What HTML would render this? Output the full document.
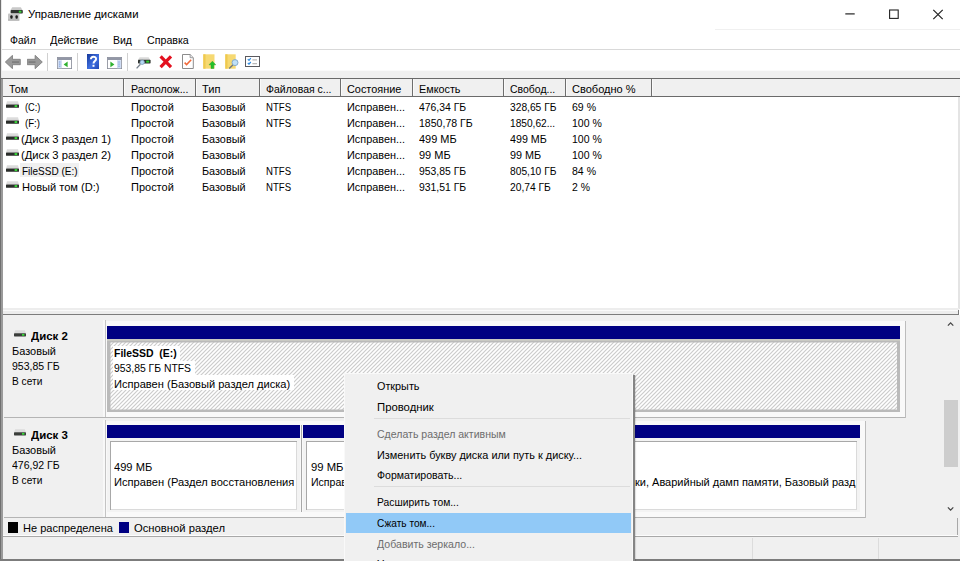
<!DOCTYPE html>
<html lang="ru">
<head>
<meta charset="utf-8">
<title>Управление дисками</title>
<style>
html,body{margin:0;padding:0;}
body{width:960px;height:561px;overflow:hidden;background:#fff;position:relative;font-family:"Liberation Sans","DejaVu Sans",sans-serif;font-size:11px;color:#000;}
.a{position:absolute;}
.t{position:absolute;white-space:pre;line-height:16px;height:16px;transform-origin:0 50%;}
.b{font-weight:bold;}
</style>
</head>
<body>
<svg class="a" style="left:840px;top:0px;" width="120" height="30" viewBox="0 0 120 30">
<path d="M5.3 13.9h9.4" stroke="#222" stroke-width="1.2" fill="none"/>
<rect x="49.6" y="10" width="8.6" height="8.4" stroke="#222" stroke-width="1.1" fill="none"/>
<path d="M93.3 9.8l9.4 9.4M102.7 9.8l-9.4 9.4" stroke="#222" stroke-width="1.2" fill="none"/>
</svg>
<div class="a" style="left:715px;top:29px;width:245px;height:1px;background:#f0f0f0;"></div>
<div class="a" style="left:0px;top:49px;width:960px;height:1px;background:#d9d9d9;"></div>
<div class="a" style="left:0px;top:71px;width:960px;height:7px;background:#f0f0f0;"></div>
<div class="a" style="left:0px;top:70px;width:960px;height:1px;background:#fafafa;"></div>
<div class="a" style="left:47px;top:53px;width:1px;height:18px;background:#d0d0d0;"></div>
<div class="a" style="left:77px;top:53px;width:1px;height:18px;background:#d0d0d0;"></div>
<div class="a" style="left:127px;top:53px;width:1px;height:18px;background:#d0d0d0;"></div>
<div class="a" style="left:0px;top:0px;width:1px;height:561px;background:#707070;"></div>
<div class="a" style="left:1px;top:0px;width:1px;height:561px;background:#e8e8e8;"></div>
<svg class="a" style="left:8px;top:6px;" width="16" height="16" viewBox="0 0 16 16">
<path d="M4.2 1.2h8.6l1.6 2.8H2.6z" fill="#c9c9c9"/>
<rect x="2.6" y="4" width="12.2" height="3.4" rx="0.7" fill="#2f322f"/>
<rect x="10.8" y="4.7" width="2.6" height="2" fill="#3bd23b"/>
<rect x="0" y="7.4" width="11.4" height="7.2" rx="0.8" fill="#c6c6c6"/>
<rect x="0" y="13.6" width="11.4" height="1" fill="#a9a9a9"/>
<rect x="2.3" y="9.3" width="2.3" height="3.5" rx="1" fill="#1c1c1c"/>
<rect x="7.5" y="9.3" width="2.3" height="3.5" rx="1" fill="#1c1c1c"/>
</svg>
<svg class="a" style="left:5px;top:55px;" width="16" height="14" viewBox="0 0 16 14"><path d="M0.3 7L7.5 0.3V4.3H15.3V9.7H7.5V13.7Z" fill="#9a9a9a" stroke="#7a7a7a" stroke-width="0.8"/><path d="M7 6.2h7v1.8H7z" fill="#7f7f7f"/></svg>
<svg class="a" style="left:27px;top:55px;" width="16" height="14" viewBox="0 0 16 14"><path d="M15.3 7L8.1 0.3V4.3H0.3V9.7H8.1V13.7Z" fill="#9a9a9a" stroke="#7a7a7a" stroke-width="0.8"/><path d="M1.5 6.2h7v1.8h-7z" fill="#7f7f7f"/></svg>
<svg class="a" style="left:56.5px;top:57px;" width="15" height="12" viewBox="0 0 15 12"><rect x="0.4" y="0.4" width="14.2" height="11.2" fill="#fff" stroke="#8b8f9b" stroke-width="0.9"/>
<rect x="0.4" y="0.4" width="14.2" height="2.6" fill="#9297a6"/>
<rect x="0.9" y="3.2" width="4" height="8" fill="#cfdcf3"/>
<path d="M2.8 4.5v1M2.8 6.6v1M2.8 8.7v1" stroke="#5d86cf" stroke-width="1"/>
<path d="M10.6 4.6v5.6L6.6 7.4z" fill="#2fb12f"/></svg>
<svg class="a" style="left:86.6px;top:54px;" width="12.4" height="15" viewBox="0 0 12.4 15"><defs><linearGradient id="hg" x1="0" y1="0" x2="1" y2="1"><stop offset="0" stop-color="#16389a"/><stop offset="0.55" stop-color="#3f6fe0"/><stop offset="1" stop-color="#2146b4"/></linearGradient></defs>
<rect x="0" y="0" width="12.4" height="15" fill="url(#hg)"/>
<path d="M3.9 5.2c0-3.2 5.2-3.2 5.2-0.2c0 2-2.6 2.2-2.6 4.6" stroke="#fff" stroke-width="1.9" fill="none"/><rect x="5.5" y="10.8" width="2" height="2" fill="#fff"/></svg>
<svg class="a" style="left:107.2px;top:57px;" width="15" height="12" viewBox="0 0 15 12"><rect x="0.4" y="0.4" width="14.2" height="11.2" fill="#fff" stroke="#8b8f9b" stroke-width="0.9"/>
<rect x="0.4" y="0.4" width="14.2" height="2.6" fill="#9297a6"/>
<rect x="10" y="3.2" width="4.1" height="8" fill="#cfdcf3"/>
<path d="M12 4.5v1M12 6.6v1M12 8.7v1" stroke="#5d86cf" stroke-width="1"/>
<path d="M3.4 4.6v5.6L7.4 7.4z" fill="#2fb12f"/></svg>
<svg class="a" style="left:136px;top:57px;" width="15" height="12" viewBox="0 0 15 12"><path d="M3.6 0.3h9l1.6 2.6H2z" fill="#dadada"/>
<rect x="2" y="2.8" width="12.6" height="3.6" rx="0.7" fill="#30342f"/>
<rect x="10.2" y="3.6" width="3" height="2" fill="#2fd22f"/>
<circle cx="6.2" cy="5.3" r="2.2" fill="#b5d9f4" stroke="#7f9fbd" stroke-width="0.8"/>
<path d="M4.4 7.2L0.6 11.4" stroke="#77808c" stroke-width="1.3"/></svg>
<svg class="a" style="left:159px;top:55px;" width="14" height="14" viewBox="0 0 14 14"><path d="M1.6 1.4L12 12.2M12 1.4L1.6 12.2" stroke="#e3101f" stroke-width="3.2" fill="none"/></svg>
<svg class="a" style="left:181.5px;top:54px;" width="12" height="15" viewBox="0 0 12 15"><path d="M0.5 0.5h7.6l3.2 3.2v10.8H0.5z" fill="#fff" stroke="#8c8c8c" stroke-width="1"/>
<path d="M8.1 0.5v3.2h3.2" fill="#e4e4ea" stroke="#8c8c8c" stroke-width="0.8"/>
<path d="M2.6 8.6l2 2L9.2 5.8" stroke="#f0693a" stroke-width="1.5" fill="none"/></svg>
<svg class="a" style="left:203px;top:54px;" width="13" height="15" viewBox="0 0 13 15"><path d="M0.3 0.3h11.2v14.4H0.3z" fill="#f6d972"/><path d="M0.3 0.3h2.2v14.4H0.3z" fill="#efc94f"/>
<path d="M9.4 7.2l3.4 3.6h-2v3.7H8v-3.7H6z" fill="#22c22a" stroke="#1b9a22" stroke-width="0.4"/></svg>
<svg class="a" style="left:225px;top:54px;" width="14" height="15" viewBox="0 0 14 15"><path d="M0.3 0.3h10.4v14.4H0.3z" fill="#f6d972"/><path d="M0.3 0.3h2.2v14.4H0.3z" fill="#efc94f"/>
<circle cx="10" cy="8.6" r="3" fill="#bfe0f7" stroke="#7fa5c6" stroke-width="0.9"/>
<path d="M7.8 11L4.2 14.4" stroke="#6f7782" stroke-width="1.4"/></svg>
<svg class="a" style="left:245px;top:56px;" width="15" height="11" viewBox="0 0 15 11"><rect x="0.5" y="0.5" width="14" height="10" fill="#fff" stroke="#5a5a5f" stroke-width="1"/>
<path d="M2.8 3.2l1.2 1.2 1.8-2.2M2.8 7l1.2 1.2 1.8-2.2" stroke="#2f8be0" stroke-width="1.2" fill="none"/>
<path d="M7.4 3.8h4.6M7.4 7.6h4.6" stroke="#b9b9b9" stroke-width="1.2"/></svg>
<div class="a" style="left:1px;top:78px;width:959px;height:1.4px;background:#6a6a6a;"></div>
<div class="a" style="left:1px;top:79px;width:2px;height:482px;background:#9a9a9a;"></div>
<div class="a" style="left:3px;top:79.4px;width:957px;height:16.4px;background:#f0f0f0;"></div>
<div class="a" style="left:3px;top:95.5px;width:957px;height:1.3px;background:#6a6a6a;"></div>
<div class="a" style="left:958px;top:97px;width:2px;height:212px;background:#e4e4e4;"></div>
<div class="a" style="left:122.8px;top:79px;width:1.4px;height:17px;background:#6e6e6e;"></div>
<div class="a" style="left:124.2px;top:79.4px;width:1px;height:16px;background:#fafafa;"></div>
<div class="a" style="left:194.8px;top:79px;width:1.4px;height:17px;background:#6e6e6e;"></div>
<div class="a" style="left:196.2px;top:79.4px;width:1px;height:16px;background:#fafafa;"></div>
<div class="a" style="left:258.8px;top:79px;width:1.4px;height:17px;background:#6e6e6e;"></div>
<div class="a" style="left:260.2px;top:79.4px;width:1px;height:16px;background:#fafafa;"></div>
<div class="a" style="left:339.8px;top:79px;width:1.4px;height:17px;background:#6e6e6e;"></div>
<div class="a" style="left:341.2px;top:79.4px;width:1px;height:16px;background:#fafafa;"></div>
<div class="a" style="left:411.8px;top:79px;width:1.4px;height:17px;background:#6e6e6e;"></div>
<div class="a" style="left:413.2px;top:79.4px;width:1px;height:16px;background:#fafafa;"></div>
<div class="a" style="left:502.8px;top:79px;width:1.4px;height:17px;background:#6e6e6e;"></div>
<div class="a" style="left:504.2px;top:79.4px;width:1px;height:16px;background:#fafafa;"></div>
<div class="a" style="left:564.8px;top:79px;width:1.4px;height:17px;background:#6e6e6e;"></div>
<div class="a" style="left:566.2px;top:79.4px;width:1px;height:16px;background:#fafafa;"></div>
<div class="a" style="left:650.8px;top:79px;width:1.4px;height:17px;background:#6e6e6e;"></div>
<div class="a" style="left:652.2px;top:79.4px;width:1px;height:16px;background:#fafafa;"></div>
<div class="a" style="left:19.5px;top:162.5px;width:59.5px;height:14px;background:#f0f0f0;"></div>
<svg class="a" style="left:5.5px;top:101.2px;" width="13" height="7" viewBox="0 0 13 7"><path d="M1.2 0.3h10.6l1.2 3.2H0z" fill="#d8d8d8"/><path d="M0.6 0.9h11.8" stroke="#e9e9e9" stroke-width="0.8"/>
<rect x="0" y="3.4" width="13" height="3.4" rx="0.6" fill="#2a2d2a"/><rect x="8.6" y="4.1" width="2.6" height="2" fill="#35d835"/></svg>
<svg class="a" style="left:5.5px;top:117.2px;" width="13" height="7" viewBox="0 0 13 7"><path d="M1.2 0.3h10.6l1.2 3.2H0z" fill="#d8d8d8"/><path d="M0.6 0.9h11.8" stroke="#e9e9e9" stroke-width="0.8"/>
<rect x="0" y="3.4" width="13" height="3.4" rx="0.6" fill="#2a2d2a"/><rect x="8.6" y="4.1" width="2.6" height="2" fill="#35d835"/></svg>
<svg class="a" style="left:5.5px;top:133.2px;" width="13" height="7" viewBox="0 0 13 7"><path d="M1.2 0.3h10.6l1.2 3.2H0z" fill="#d8d8d8"/><path d="M0.6 0.9h11.8" stroke="#e9e9e9" stroke-width="0.8"/>
<rect x="0" y="3.4" width="13" height="3.4" rx="0.6" fill="#2a2d2a"/><rect x="8.6" y="4.1" width="2.6" height="2" fill="#35d835"/></svg>
<svg class="a" style="left:5.5px;top:149.2px;" width="13" height="7" viewBox="0 0 13 7"><path d="M1.2 0.3h10.6l1.2 3.2H0z" fill="#d8d8d8"/><path d="M0.6 0.9h11.8" stroke="#e9e9e9" stroke-width="0.8"/>
<rect x="0" y="3.4" width="13" height="3.4" rx="0.6" fill="#2a2d2a"/><rect x="8.6" y="4.1" width="2.6" height="2" fill="#35d835"/></svg>
<svg class="a" style="left:5.5px;top:165.2px;" width="13" height="7" viewBox="0 0 13 7"><path d="M1.2 0.3h10.6l1.2 3.2H0z" fill="#d8d8d8"/><path d="M0.6 0.9h11.8" stroke="#e9e9e9" stroke-width="0.8"/>
<rect x="0" y="3.4" width="13" height="3.4" rx="0.6" fill="#2a2d2a"/><rect x="8.6" y="4.1" width="2.6" height="2" fill="#35d835"/></svg>
<svg class="a" style="left:5.5px;top:181.2px;" width="13" height="7" viewBox="0 0 13 7"><path d="M1.2 0.3h10.6l1.2 3.2H0z" fill="#d8d8d8"/><path d="M0.6 0.9h11.8" stroke="#e9e9e9" stroke-width="0.8"/>
<rect x="0" y="3.4" width="13" height="3.4" rx="0.6" fill="#2a2d2a"/><rect x="8.6" y="4.1" width="2.6" height="2" fill="#35d835"/></svg>
<div class="a" style="left:3px;top:308px;width:956px;height:6px;background:#ededed;"></div>
<div class="a" style="left:3px;top:310px;width:955px;height:1px;background:#fafafa;"></div>
<div class="a" style="left:3px;top:313.5px;width:956px;height:2px;background:#7c7c7c;"></div>
<div class="a" style="left:958px;top:310px;width:1px;height:5px;background:#7c7c7c;"></div>
<div class="a" style="left:3px;top:315px;width:957px;height:246px;background:#f0f0f0;"></div>
<div class="a" style="left:944px;top:400px;width:14px;height:67px;background:#cdcdcd;"></div>
<svg class="a" style="left:945px;top:320px;" width="12" height="8" viewBox="0 0 12 8"><path d="M2.9 5.6L5.6 2.9L8.3 5.6" stroke="#484848" stroke-width="1.3" fill="none"/></svg>
<svg class="a" style="left:945px;top:505px;" width="12" height="8" viewBox="0 0 12 8"><path d="M2.9 2.4L5.6 5.1L8.3 2.4" stroke="#484848" stroke-width="1.3" fill="none"/></svg>
<div class="a" style="left:4px;top:320px;width:99px;height:97px;background:#f0f0f0;"></div>
<div class="a" style="left:103px;top:320px;width:2px;height:97px;background:#f8f8f8;"></div>
<div class="a" style="left:105px;top:320px;width:1px;height:97px;background:#c4c4c4;"></div>
<div class="a" style="left:4px;top:417px;width:102px;height:1px;background:#b4b4b4;"></div>
<div class="a" style="left:106px;top:321px;width:799px;height:96px;background:#f9f9f9;"></div>
<div class="a" style="left:905px;top:321px;width:1px;height:97px;background:#bcbcbc;"></div>
<div class="a" style="left:106px;top:417px;width:799px;height:1px;background:#b4b4b4;"></div>
<svg class="a" style="left:13.5px;top:329.8px;" width="12" height="7" viewBox="0 0 12 7"><path d="M1.2 0.3h9.6l1.2 3H0z" fill="#dcdcdc"/><rect x="0" y="3.2" width="12" height="3.2" rx="0.6" fill="#3a3d3a"/><rect x="8" y="3.9" width="2.4" height="1.8" fill="#35d835"/></svg>
<div class="a" style="left:4px;top:420px;width:99px;height:97px;background:#f0f0f0;"></div>
<div class="a" style="left:103px;top:420px;width:2px;height:97px;background:#f8f8f8;"></div>
<div class="a" style="left:105px;top:420px;width:1px;height:97px;background:#c4c4c4;"></div>
<div class="a" style="left:4px;top:517px;width:102px;height:1px;background:#b4b4b4;"></div>
<div class="a" style="left:106px;top:421px;width:759px;height:96px;background:#f9f9f9;"></div>
<div class="a" style="left:865px;top:421px;width:1px;height:97px;background:#bcbcbc;"></div>
<div class="a" style="left:106px;top:517px;width:759px;height:1px;background:#b4b4b4;"></div>
<svg class="a" style="left:13.5px;top:428.5px;" width="12" height="7" viewBox="0 0 12 7"><path d="M1.2 0.3h9.6l1.2 3H0z" fill="#dcdcdc"/><rect x="0" y="3.2" width="12" height="3.2" rx="0.6" fill="#3a3d3a"/><rect x="8" y="3.9" width="2.4" height="1.8" fill="#35d835"/></svg>
<div class="a" style="left:107px;top:325.5px;width:793px;height:13.3px;background:#000082;"></div>
<div class="a" style="left:106.5px;top:339px;width:793.5px;height:73px;background:#bababa;box-shadow:inset 0 2px 0 #c9c9c3;"></div>
<svg class="a" style="left:110px;top:342px;" width="787" height="68" viewBox="0 0 787 68"><defs><pattern id="hp" width="4" height="4" patternUnits="userSpaceOnUse"><rect width="4" height="4" fill="#fff"/><path d="M-1 1L1 -1M-1 5L5 -1M3 5L5 3" stroke="#cccccc" stroke-width="1.2"/></pattern></defs><rect x="0.5" y="0.5" width="786.5" height="67" fill="url(#hp)"/></svg>
<div class="a" style="left:112.5px;top:346px;width:67.5px;height:15px;background:#fff;"></div>
<div class="a" style="left:112.5px;top:360.6px;width:82.5px;height:15px;background:#fff;"></div>
<div class="a" style="left:112.5px;top:375px;width:181px;height:15.4px;background:#fff;"></div>
<div class="a" style="left:107px;top:425px;width:193.39999999999998px;height:13px;background:#000082;"></div>
<div class="a" style="left:107px;top:438px;width:193.39999999999998px;height:74px;background:#f3f3f3;"></div>
<div class="a" style="left:110px;top:440.5px;width:187.39999999999998px;height:69px;background:#fff;box-shadow:inset 1px 1px 0 #a8a8a8, inset -1px -1px 0 #dadada;"></div>
<div class="a" style="left:303px;top:425px;width:557px;height:13px;background:#000082;"></div>
<div class="a" style="left:303px;top:438px;width:557px;height:74px;background:#f3f3f3;"></div>
<div class="a" style="left:306px;top:440.5px;width:551px;height:69px;background:#fff;box-shadow:inset 1px 1px 0 #a8a8a8, inset -1px -1px 0 #dadada;"></div>
<div class="a" style="left:301.3px;top:425px;width:1px;height:87px;background:#a8a8a8;"></div>
<div class="a" style="left:3px;top:518px;width:955px;height:17px;background:#f0f0f0;"></div>
<div class="a" style="left:957px;top:518px;width:1px;height:18px;background:#a8a8a8;"></div>
<div class="a" style="left:8px;top:521.5px;width:10px;height:11.3px;background:#000;"></div>
<div class="a" style="left:119px;top:521.5px;width:10px;height:11.3px;background:#000082;"></div>
<div class="a" style="left:3px;top:535px;width:955px;height:1px;background:#fcfcfc;"></div>
<div class="a" style="left:3px;top:536px;width:955px;height:1px;background:#a8a8a8;"></div>
<div class="a" style="left:3px;top:537px;width:957px;height:22px;background:#f0f0f0;"></div>
<div class="a" style="left:752px;top:538px;width:1px;height:21px;background:#dcdcdc;"></div>
<div class="a" style="left:878px;top:538px;width:1px;height:21px;background:#dcdcdc;"></div>
<div class="a" style="left:0px;top:559px;width:960px;height:2px;background:#7c7c7c;"></div>
<div class="a" style="left:633.2px;top:375px;width:1.4px;height:190px;background:#858585;z-index:9;box-shadow:1px 0 1px rgba(0,0,0,.12);"></div>
<div class="a" style="left:344px;top:372.5px;width:289.3px;height:190px;background:#f0f0f0;z-index:10;box-shadow:inset 1px 1px 0 #f9f9f9, inset -1px 0 0 #f9f9f9;"></div>
<div class="a" style="left:346.3px;top:512.5px;width:285px;height:20px;background:#91c9f7;z-index:11;"></div>
<div class="a" style="left:374px;top:418px;width:256px;height:1px;background:#dcdcdc;z-index:11;"></div>
<div class="a" style="left:374px;top:486px;width:256px;height:1px;background:#dcdcdc;z-index:11;"></div>
<span class="t" style="left:27.5px;top:6.19px;transform:scaleX(1.0312);">Управление дисками</span>
<span class="t" style="left:10px;top:31.89px;transform:scaleX(0.9539);">Файл</span>
<span class="t" style="left:50px;top:31.89px;transform:scaleX(0.9926);">Действие</span>
<span class="t" style="left:113px;top:31.89px;transform:scaleX(0.9545);">Вид</span>
<span class="t" style="left:147px;top:31.89px;transform:scaleX(0.9686);">Справка</span>
<span class="t" style="left:9px;top:81.49px;transform:scaleX(0.9720);">Том</span>
<span class="t" style="left:130.5px;top:81.49px;transform:scaleX(0.9664);">Располож...</span>
<span class="t" style="left:202px;top:81.49px;transform:scaleX(1.0085);">Тип</span>
<span class="t" style="left:265.8px;top:81.49px;transform:scaleX(0.9519);">Файловая с...</span>
<span class="t" style="left:347px;top:81.49px;transform:scaleX(0.9892);">Состояние</span>
<span class="t" style="left:419.2px;top:81.49px;transform:scaleX(0.9826);">Емкость</span>
<span class="t" style="left:510.2px;top:81.49px;transform:scaleX(0.9506);">Свобод...</span>
<span class="t" style="left:572px;top:81.49px;transform:scaleX(1.0031);">Свободно %</span>
<span class="t" style="left:25px;top:98.89px;transform:scaleX(0.8402);">(C:)</span>
<span class="t" style="left:130.5px;top:98.89px;transform:scaleX(0.9993);">Простой</span>
<span class="t" style="left:202px;top:98.89px;transform:scaleX(0.9851);">Базовый</span>
<span class="t" style="left:266.2px;top:98.89px;transform:scaleX(0.8735);">NTFS</span>
<span class="t" style="left:347px;top:98.89px;transform:scaleX(0.9883);">Исправен...</span>
<span class="t" style="left:419.3px;top:98.89px;transform:scaleX(0.9461);">476,34 ГБ</span>
<span class="t" style="left:510.2px;top:98.89px;transform:scaleX(0.9300);">328,65 ГБ</span>
<span class="t" style="left:572px;top:98.89px;transform:scaleX(0.9570);">69 %</span>
<span class="t" style="left:25px;top:114.89px;transform:scaleX(0.8767);">(F:)</span>
<span class="t" style="left:130.5px;top:114.89px;transform:scaleX(0.9993);">Простой</span>
<span class="t" style="left:202px;top:114.89px;transform:scaleX(0.9851);">Базовый</span>
<span class="t" style="left:266.2px;top:114.89px;transform:scaleX(0.8735);">NTFS</span>
<span class="t" style="left:347px;top:114.89px;transform:scaleX(0.9883);">Исправен...</span>
<span class="t" style="left:419.3px;top:114.89px;transform:scaleX(0.9589);">1850,78 ГБ</span>
<span class="t" style="left:510.2px;top:114.89px;transform:scaleX(0.9236);">1850,62...</span>
<span class="t" style="left:572px;top:114.89px;transform:scaleX(0.9550);">100 %</span>
<span class="t" style="left:21.3px;top:130.89px;transform:scaleX(1.0211);">(Диск 3 раздел 1)</span>
<span class="t" style="left:130.5px;top:130.89px;transform:scaleX(0.9993);">Простой</span>
<span class="t" style="left:202px;top:130.89px;transform:scaleX(0.9851);">Базовый</span>
<span class="t" style="left:347px;top:130.89px;transform:scaleX(0.9883);">Исправен...</span>
<span class="t" style="left:419.3px;top:130.89px;transform:scaleX(0.9974);">499 МБ</span>
<span class="t" style="left:510.2px;top:130.89px;transform:scaleX(0.9736);">499 МБ</span>
<span class="t" style="left:572px;top:130.89px;transform:scaleX(0.9550);">100 %</span>
<span class="t" style="left:21.3px;top:146.89px;transform:scaleX(1.0211);">(Диск 3 раздел 2)</span>
<span class="t" style="left:130.5px;top:146.89px;transform:scaleX(0.9993);">Простой</span>
<span class="t" style="left:202px;top:146.89px;transform:scaleX(0.9851);">Базовый</span>
<span class="t" style="left:347px;top:146.89px;transform:scaleX(0.9883);">Исправен...</span>
<span class="t" style="left:419.3px;top:146.89px;transform:scaleX(1.0004);">99 МБ</span>
<span class="t" style="left:510.2px;top:146.89px;transform:scaleX(0.9846);">99 МБ</span>
<span class="t" style="left:572px;top:146.89px;transform:scaleX(0.9550);">100 %</span>
<span class="t" style="left:22px;top:162.89px;transform:scaleX(0.9080);">FileSSD (E:)</span>
<span class="t" style="left:130.5px;top:162.89px;transform:scaleX(0.9993);">Простой</span>
<span class="t" style="left:202px;top:162.89px;transform:scaleX(0.9851);">Базовый</span>
<span class="t" style="left:266.2px;top:162.89px;transform:scaleX(0.8735);">NTFS</span>
<span class="t" style="left:347px;top:162.89px;transform:scaleX(0.9883);">Исправен...</span>
<span class="t" style="left:419.3px;top:162.89px;transform:scaleX(0.9461);">953,85 ГБ</span>
<span class="t" style="left:510.2px;top:162.89px;transform:scaleX(0.9300);">805,10 ГБ</span>
<span class="t" style="left:572px;top:162.89px;transform:scaleX(0.9570);">84 %</span>
<span class="t" style="left:22px;top:178.89px;transform:scaleX(1.0065);">Новый том (D:)</span>
<span class="t" style="left:130.5px;top:178.89px;transform:scaleX(0.9993);">Простой</span>
<span class="t" style="left:202px;top:178.89px;transform:scaleX(0.9851);">Базовый</span>
<span class="t" style="left:266.2px;top:178.89px;transform:scaleX(0.8735);">NTFS</span>
<span class="t" style="left:347px;top:178.89px;transform:scaleX(0.9883);">Исправен...</span>
<span class="t" style="left:419.3px;top:178.89px;transform:scaleX(0.9461);">931,51 ГБ</span>
<span class="t" style="left:510.2px;top:178.89px;transform:scaleX(0.9322);">20,74 ГБ</span>
<span class="t" style="left:572px;top:178.89px;transform:scaleX(0.9489);">2 %</span>
<span class="t b" style="left:31.2px;top:328.49px;transform:scaleX(1.0394);">Диск 2</span>
<span class="t" style="left:11.5px;top:343.19px;transform:scaleX(0.9965);">Базовый</span>
<span class="t" style="left:11.5px;top:358.19px;transform:scaleX(0.9561);">953,85 ГБ</span>
<span class="t" style="left:11.5px;top:373.19px;transform:scaleX(0.9230);">В сети</span>
<span class="t b" style="left:31.2px;top:427.19px;transform:scaleX(1.0394);">Диск 3</span>
<span class="t" style="left:11.5px;top:441.89px;transform:scaleX(0.9965);">Базовый</span>
<span class="t" style="left:11.5px;top:456.89px;transform:scaleX(0.9561);">476,92 ГБ</span>
<span class="t" style="left:11.5px;top:471.89px;transform:scaleX(0.9230);">В сети</span>
<span class="t b" style="left:114.3px;top:344.79px;transform:scaleX(0.9498);">FileSSD  (E:)</span>
<span class="t" style="left:114.3px;top:360.19px;transform:scaleX(0.9430);">953,85 ГБ NTFS</span>
<span class="t" style="left:114.3px;top:375.59px;transform:scaleX(1.0075);">Исправен (Базовый раздел диска)</span>
<span class="t" style="left:114.2px;top:458.59px;transform:scaleX(1.0107);">499 МБ</span>
<span class="t" style="left:114.2px;top:473.89px;transform:scaleX(1.0128);">Исправен (Раздел восстановления</span>
<span class="t" style="left:310.5px;top:458.59px;transform:scaleX(1.0256);">99 МБ</span>
<span class="t" style="left:310.5px;top:473.89px;transform:scaleX(0.9593);">Исправен</span>
<span class="t b" style="left:440px;top:444.19px;transform:scaleX(1.1617);">(C:)</span>
<span class="t" style="left:440px;top:459.19px;transform:scaleX(0.9430);">476,34 ГБ NTFS</span>
<span class="t" style="left:440px;top:474.19px;transform:scaleX(1.1057);">Исправен (Загрузка, Файл подкач</span>
<span class="t" style="left:635px;top:474.19px;transform:scaleX(0.9997);">ки, Аварийный дамп памяти, Базовый разд</span>
<span class="t" style="left:22.8px;top:520.19px;transform:scaleX(1.0022);">Не распределена</span>
<span class="t" style="left:134px;top:520.19px;transform:scaleX(1.0225);">Основной раздел</span>
<span class="t" style="left:377px;top:378.09px;transform:scaleX(0.9837);z-index:12;">Открыть</span>
<span class="t" style="left:377px;top:398.59px;transform:scaleX(1.0289);z-index:12;">Проводник</span>
<span class="t" style="left:377px;top:425.59px;transform:scaleX(0.9582);color:#6d6d6d;z-index:12;">Сделать раздел активным</span>
<span class="t" style="left:377px;top:446.59px;transform:scaleX(0.9904);z-index:12;">Изменить букву диска или путь к диску...</span>
<span class="t" style="left:377px;top:467.19px;transform:scaleX(0.9584);z-index:12;">Форматировать...</span>
<span class="t" style="left:377px;top:494.09px;transform:scaleX(0.9357);z-index:12;">Расширить том...</span>
<span class="t" style="left:377px;top:514.79px;transform:scaleX(0.9204);z-index:12;">Сжать том...</span>
<span class="t" style="left:377px;top:535.99px;transform:scaleX(0.9624);color:#6d6d6d;z-index:12;">Добавить зеркало...</span>
<span class="t" style="left:377px;top:555.79px;transform:scaleX(1.0024);z-index:12;">Удалить том...</span>
</body>
</html>
